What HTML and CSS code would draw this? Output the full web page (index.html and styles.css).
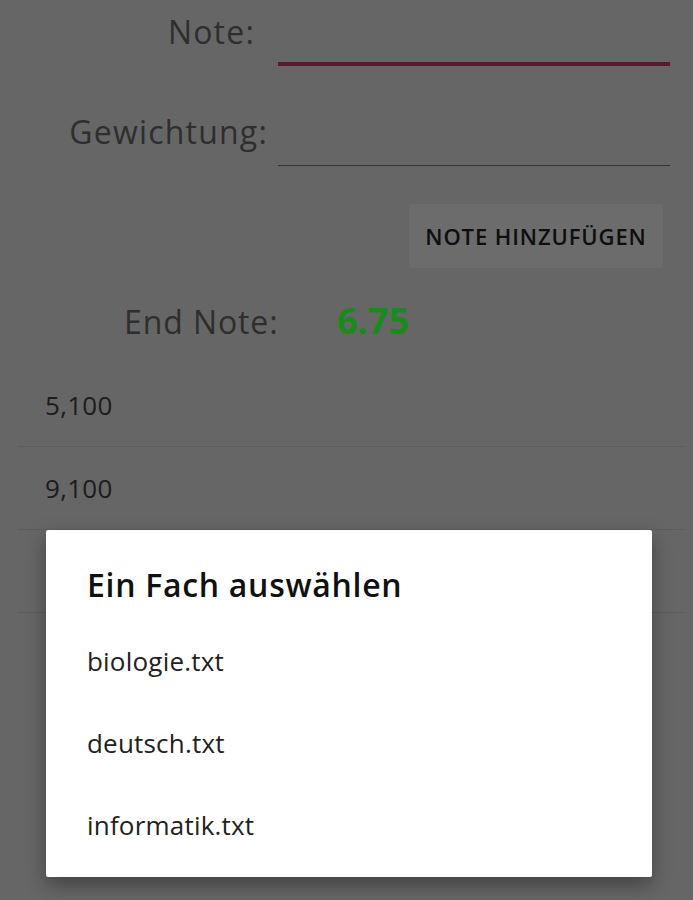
FILE: index.html
```html
<!DOCTYPE html>
<html lang="de">
<head>
<meta charset="UTF-8">
<meta name="viewport" content="width=device-width, initial-scale=1.0">
<title>Noten</title>
<link rel="stylesheet" href="styles.css">
</head>
<body>

<div id="app">
  <div class="field-row">
    <label class="label label-note">Note:</label>
    <div class="input input-active"></div>
  </div>
  <div class="field-row">
    <label class="label">Gewichtung:</label>
    <div class="input"></div>
  </div>

  <div class="button-row">
    <button class="add-button">NOTE HINZUFÜGEN</button>
  </div>

  <div class="result-row">
    <span class="result-label">End Note:</span>
    <span class="result-value">6.75</span>
  </div>

  <ul class="grade-list">
    <li>5,100</li>
    <li>9,100</li>
    <li>&nbsp;</li>
  </ul>
</div>

<!-- Dialog ueber der abgedunkelten Seite -->
<div class="dialog">
  <h2 class="dialog-title">Ein Fach auswählen</h2>
  <div class="dialog-item">biologie.txt</div>
  <div class="dialog-item">deutsch.txt</div>
  <div class="dialog-item">informatik.txt</div>
</div>

</body>
</html>
```

FILE: styles.css
```css
body {
  font-family: "Open Sans", "Noto Sans", sans-serif;
  background-color: #666666;
  margin: 0;
  padding: 0;
  width: 693px;
  height: 900px;
  overflow: hidden;
  position: relative;
}
#app {
  display: flex;
  flex-direction: column;
}
.field-row {
  display: flex;
  align-items: flex-end;
  height: 100px;
}
.field-row:first-child {
  height: 66px;
}
.label {
  width: 268px;
  text-align: right;
  font-size: 32px;
  font-weight: 400;
  letter-spacing: 1.2px;
  color: #2e2e2e;
  padding-bottom: 13px;
}
.label-note {
  padding-right: 13px;
  width: 255px;
}
.input {
  margin-left: 10px;
  width: 392px;
  height: 55px;
  border-bottom: 1px solid #333333;
}
.input-active {
  border-bottom: 4px solid #561a31;
}
.button-row {
  display: flex;
  justify-content: flex-end;
  padding: 38px 30px 0 0;
}
.add-button {
  background: #6c6c6c;
  color: #0e0e0e;
  border: none;
  border-radius: 2px;
  width: 254px;
  height: 64px;
  font-family: "Open Sans", sans-serif;
  font-size: 22px;
  font-weight: 600;
  letter-spacing: 0.9px;
  padding: 0;
}
.result-row {
  display: flex;
  align-items: baseline;
  padding: 28px 0 0 124px;
  height: 62px;
}
.result-label {
  font-size: 32px;
  font-weight: 400;
  letter-spacing: 0.9px;
  color: #2e2e2e;
  width: 213px;
}
.result-value {
  font-size: 36px;
  font-weight: 700;
  color: #1a8a1a;
}
.grade-list {
  list-style: none;
  margin: 6px 8px 0 18px;
  padding: 0;
}
.grade-list li {
  height: 82px;
  line-height: 82px;
  padding-left: 27px;
  font-size: 26px;
  letter-spacing: 0.3px;
  color: #1c1c1c;
  border-bottom: 1px solid #5c5c5c;
}
.dialog {
  position: absolute;
  left: 46px;
  top: 530px;
  width: 606px;
  height: 347px;
  background: #ffffff;
  border-radius: 2px;
  box-shadow: 0px 8px 20px rgba(0, 0, 0, 0.35);
  box-sizing: border-box;
  padding: 30px 0 0 41px;
}
.dialog-title {
  margin: 0 0 10px 0;
  font-size: 32px;
  font-weight: 600;
  letter-spacing: 0.7px;
  color: #111111;
  line-height: 50px;
}
.dialog-item {
  height: 82px;
  line-height: 82px;
  font-size: 26px;
  letter-spacing: 0.2px;
  color: #222222;
}
```
